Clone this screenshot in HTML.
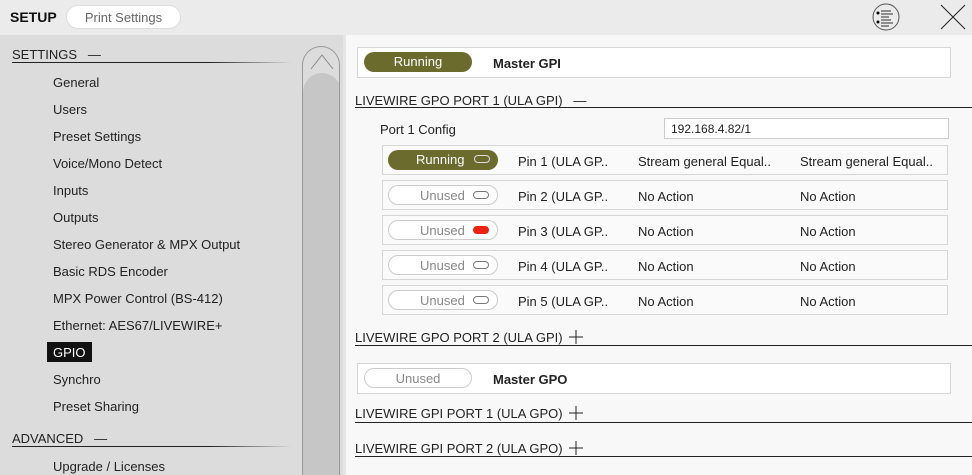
<!DOCTYPE html>
<html style="overflow:hidden;height:475px"><head><style>
*{margin:0;padding:0;box-sizing:border-box}
body{width:972px;height:475px;overflow:hidden;background:#f8f8f8;font-family:"Liberation Sans",sans-serif;font-size:13px;color:#222;position:relative}
.a{position:absolute}
.top{left:0;top:0;width:972px;height:35px;background:#ebebeb}
.left{left:0;top:35px;width:343px;height:440px;background:#dcdcdc}
.strip{left:343px;top:35px;width:3px;height:440px;background:#e6e6e6}
.nav{left:53px;font-size:13px;color:#222}
.hdr{font-size:13px;color:#222}
.line{height:1px;background:#222}
.pill{border-radius:14px;height:20px;text-align:center;line-height:20px;font-size:13px}
.run{background:#6b6b2e;color:#fff}
.un{background:#fff;border:1px solid #ccc;color:#888}
.row{left:382px;width:566px;height:30px;border:1px solid #d6d6d6;background:#fafafa}
.dot{position:absolute;width:16px;height:8px;border-radius:4px;border:1px solid #777;top:5px;right:8px}
</style></head><body>
<div class="a top"></div>
<div class="a" style="left:10px;top:9px;font-weight:bold;font-size:14px;color:#111">SETUP</div>
<div class="a pill" style="left:66px;top:5px;width:115px;height:24px;line-height:24px;background:#fff;border:1px solid #ddd;color:#666">Print Settings</div>
<svg class="a" style="left:872px;top:3px" width="30" height="30"><circle cx="14" cy="14" r="13" fill="none" stroke="#555"/><circle cx="6" cy="10" r="1.5"/><circle cx="6" cy="19" r="1.5"/><path d="M9 8h10M9 11h12M9 14h8M9 17h10M9 20h12M9 23h8" stroke="#555" stroke-width="1.3"/></svg>
<svg class="a" style="left:940px;top:4px" width="26" height="26"><path d="M1 1L25 25M25 1L1 25" stroke="#222"/></svg>
<div class="a left"></div><div class="a strip"></div>
<div class="a hdr" style="left:12px;top:47px">SETTINGS &nbsp;&nbsp;—</div>
<div class="a line" style="left:12px;top:62px;width:280px;background:linear-gradient(90deg,#222 70%,#dcdcdc)"></div>
<div class="a nav" style="top:75px">General</div>
<div class="a nav" style="top:102px">Users</div>
<div class="a nav" style="top:129px">Preset Settings</div>
<div class="a nav" style="top:156px">Voice/Mono Detect</div>
<div class="a nav" style="top:183px">Inputs</div>
<div class="a nav" style="top:210px">Outputs</div>
<div class="a nav" style="top:237px">Stereo Generator &amp; MPX Output</div>
<div class="a nav" style="top:264px">Basic RDS Encoder</div>
<div class="a nav" style="top:291px">MPX Power Control (BS-412)</div>
<div class="a nav" style="top:318px">Ethernet: AES67/LIVEWIRE+</div>
<div class="a" style="left:47px;top:342px;width:45px;height:20px;background:#111"></div>
<div class="a nav" style="top:345px;color:#fff">GPIO</div>
<div class="a nav" style="top:372px">Synchro</div>
<div class="a nav" style="top:399px">Preset Sharing</div>
<div class="a hdr" style="left:12px;top:431px">ADVANCED &nbsp;&nbsp;—</div>
<div class="a line" style="left:12px;top:446px;width:280px;background:linear-gradient(90deg,#222 70%,#dcdcdc)"></div>
<div class="a nav" style="top:459px">Upgrade / Licenses</div>
<div class="a" style="left:302px;top:46px;width:38px;height:429px;border:1px solid #999;border-bottom:none;border-radius:19px 19px 0 0;background:#dcdcdc;overflow:hidden">
<div style="position:absolute;left:0;top:26px;width:38px;height:440px;border-radius:19px 19px 0 0;background:#c6c6c6"></div>
<svg style="position:absolute;left:6px;top:5px" width="26" height="20"><path d="M2 17L13 3L24 17" fill="none" stroke="#888"/></svg></div>

<div class="a" style="left:357px;top:47px;width:594px;height:31px;border:1px solid #d6d6d6;background:#fff"></div>
<div class="a pill run" style="left:364px;top:52px;width:108px">Running</div>
<div class="a" style="left:493px;top:56px;font-weight:bold">Master GPI</div>
<div class="a hdr" style="left:355px;top:93px">LIVEWIRE GPO PORT 1 (ULA GPI) &nbsp;&nbsp;—</div>
<div class="a line" style="left:355px;top:107px;width:617px"></div>
<div class="a" style="left:380px;top:122px">Port 1 Config</div>
<div class="a" style="left:664px;top:118px;width:285px;height:21px;border:1px solid #ccc;background:#fff;padding:3px 6px;font-size:12px">192.168.4.82/1</div>

<div class="a row" style="top:145px"></div>
<div class="a pill run" style="left:388px;top:150px;width:110px;text-align:left;padding-left:28px">Running<span class="dot" style="border-color:#ddd"></span></div>
<div class="a" style="left:518px;top:154px">Pin 1 (ULA GP..</div><div class="a" style="left:638px;top:154px">Stream general Equal..</div><div class="a" style="left:800px;top:154px">Stream general Equal..</div>

<div class="a row" style="top:180px"></div>
<div class="a pill un" style="left:388px;top:185px;width:110px;text-align:left;padding-left:31px">Unused<span class="dot"></span></div>
<div class="a" style="left:518px;top:189px">Pin 2 (ULA GP..</div><div class="a" style="left:638px;top:189px">No Action</div><div class="a" style="left:800px;top:189px">No Action</div>

<div class="a row" style="top:215px"></div>
<div class="a pill un" style="left:388px;top:220px;width:110px;text-align:left;padding-left:31px">Unused<span class="dot" style="background:#e21;border-color:#e21"></span></div>
<div class="a" style="left:518px;top:224px">Pin 3 (ULA GP..</div><div class="a" style="left:638px;top:224px">No Action</div><div class="a" style="left:800px;top:224px">No Action</div>

<div class="a row" style="top:250px"></div>
<div class="a pill un" style="left:388px;top:255px;width:110px;text-align:left;padding-left:31px">Unused<span class="dot"></span></div>
<div class="a" style="left:518px;top:259px">Pin 4 (ULA GP..</div><div class="a" style="left:638px;top:259px">No Action</div><div class="a" style="left:800px;top:259px">No Action</div>

<div class="a row" style="top:285px"></div>
<div class="a pill un" style="left:388px;top:290px;width:110px;text-align:left;padding-left:31px">Unused<span class="dot"></span></div>
<div class="a" style="left:518px;top:294px">Pin 5 (ULA GP..</div><div class="a" style="left:638px;top:294px">No Action</div><div class="a" style="left:800px;top:294px">No Action</div>

<div class="a hdr" style="left:355px;top:330px">LIVEWIRE GPO PORT 2 (ULA GPI)</div>
<svg class="a" style="left:568px;top:329px" width="16" height="16"><path d="M8 1V15M1 8H15" stroke="#222"/></svg>
<div class="a line" style="left:355px;top:345px;width:617px"></div>

<div class="a" style="left:357px;top:363px;width:594px;height:31px;border:1px solid #d6d6d6;background:#fff"></div>
<div class="a pill un" style="left:364px;top:368px;width:108px">Unused</div>
<div class="a" style="left:493px;top:372px;font-weight:bold">Master GPO</div>

<div class="a hdr" style="left:355px;top:406px">LIVEWIRE GPI PORT 1 (ULA GPO)</div>
<svg class="a" style="left:568px;top:405px" width="16" height="16"><path d="M8 1V15M1 8H15" stroke="#222"/></svg>
<div class="a line" style="left:355px;top:422px;width:617px"></div>
<div class="a hdr" style="left:355px;top:441px">LIVEWIRE GPI PORT 2 (ULA GPO)</div>
<svg class="a" style="left:568px;top:440px" width="16" height="16"><path d="M8 1V15M1 8H15" stroke="#222"/></svg>
<div class="a line" style="left:355px;top:456px;width:617px"></div>
</body></html>
